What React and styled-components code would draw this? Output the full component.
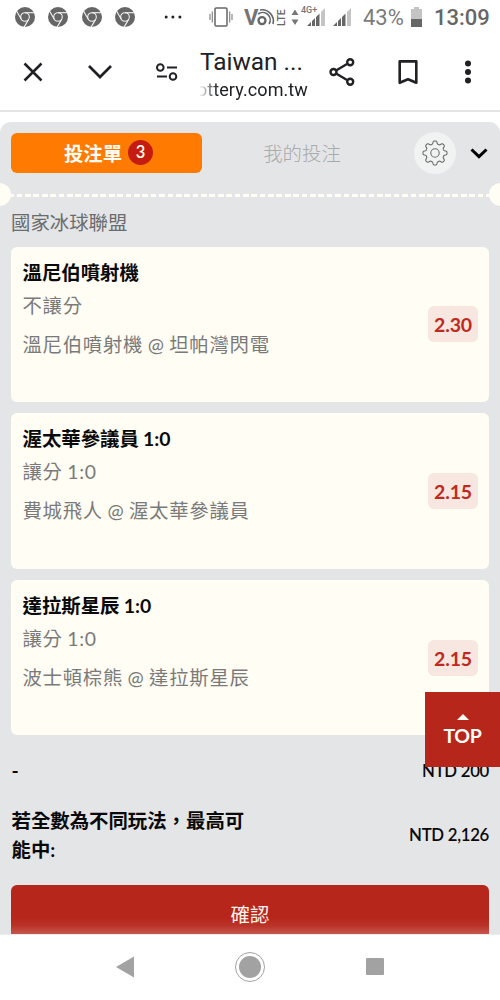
import React from 'react';
import styled, { createGlobalStyle } from 'styled-components';

const Global = createGlobalStyle`
  * { box-sizing: border-box; }
  body { margin: 0; background: #fff; }
  button { border: 0; padding: 0; background: none; font: inherit; color: inherit; }
  svg { display: block; flex: none; overflow: visible; }
`;

const Screen = styled.div`
  position: relative;
  width: 500px;
  height: 1000px;
  overflow: hidden;
  display: flex;
  flex-direction: column;
  background: #fff;
  font-family: Lato, 'Noto Sans CJK TC', sans-serif;
`;

const StatusBar = styled.header`
  height: 34px;
  flex: none;
  display: flex;
  align-items: center;
  justify-content: space-between;
  padding: 0 11px 0 15px;
  font-family: Roboto, sans-serif;
  color: #666;
`;
const StatusGroup = styled.div`
  display: flex;
  align-items: center;
  gap: ${(p) => p.$gap}px;
`;
const Battery = styled.span`
  font-size: 22px;
  line-height: 35px;
  width: 42px;
  white-space: nowrap;
  color: #7c7c7c;
`;
const Clock = styled.span`
  font-size: 22px;
  line-height: 35px;
  font-weight: 500;
  width: 55px;
  white-space: nowrap;
`;

const Toolbar = styled.nav`
  height: 78px;
  flex: none;
  display: flex;
  align-items: center;
  padding: 0 15px 0 23px;
  border-bottom: 2px solid #e3e4e6;
  font-family: Roboto, sans-serif;
  color: #202124;
`;
const ToolButton = styled.button`
  display: flex;
  justify-content: center;
  width: ${(p) => p.$w}px;
  flex: none;
`;
const Site = styled.div`
  width: 109px;
  flex: none;
  padding-top: 5px;
  margin: 0 20px 0 22px;
  white-space: nowrap;
`;
const SiteTitle = styled.div`
  font-size: 24.4px;
  line-height: 30px;
`;
const SiteUrl = styled.div`
  width: 108px;
  overflow: hidden;
  display: flex;
  justify-content: flex-end;
  font-size: 18px;
  letter-spacing: 0.1px;
  line-height: 25px;
  mask-image: linear-gradient(90deg, rgba(0,0,0,0.05), #000 18px);
`;

const Slip = styled.main`
  margin-top: 10px;
  height: 812px;
  flex: none;
  overflow: hidden;
  background: #e4e5e7;
  border-radius: 11px 11px 0 0;
  display: flex;
  flex-direction: column;
  & > * { flex: none; }
`;
const Tabs = styled.div`
  display: flex;
  align-items: center;
  height: 42px;
  margin-top: 10px;
  padding: 0 12px 0 11px;
`;
const Tab = styled.button`
  width: 191px;
  height: 40px;
  display: flex;
  align-items: center;
  justify-content: center;
  gap: 6px;
  border-radius: 6px;
  font-size: 19.4px;
  font-weight: ${(p) => (p.$active ? 600 : 300)};
  color: ${(p) => (p.$active ? '#fffdf4' : '#a9aaac')};
  background: ${(p) => (p.$active ? '#ff7a00' : 'transparent')};
  padding-left: ${(p) => (p.$active ? 4 : 9)}px;
  padding-bottom: 2px;
`;
const Count = styled.span`
  width: 25px;
  height: 25px;
  margin-top: 1px;
  border-radius: 50%;
  background: #c41c10;
  font-size: 16.5px;
  line-height: 25px;
  text-align: center;
`;
const Gear = styled.button`
  width: 42px;
  height: 42px;
  border-radius: 50%;
  background: #f1f3f3;
  display: grid;
  place-items: center;
  margin-left: 21px;
  margin-right: 14px;
`;
const Perforation = styled.div`
  display: flex;
  align-items: center;
  justify-content: space-between;
  height: 23px;
  margin: 8.5px -12px 0;
`;
const Notch = styled.i`
  width: 23px;
  height: 23px;
  border-radius: 50%;
  background: #fffdf4;
`;
const Dashes = styled.i`
  flex: 1;
  height: 3px;
  margin-top: 3px;
  background: repeating-linear-gradient(90deg, #fffdf4 0 3px, transparent 3px 5.7px, #fffdf4 5.7px 8.38px);
`;
const League = styled.h2`
  margin: 0 0 0 11px;
  height: 41.2px;
  padding-top: 3px;
  font-size: 19.4px;
  line-height: 28px;
  font-weight: 400;
  color: #6b6c6e;
`;
const Cards = styled.div`
  display: flex;
  flex-direction: column;
  gap: 11.2px;
  padding: 0 11px;
`;
const Card = styled.article`
  height: 155.4px;
  border-radius: 6px;
  background: #fffdf4;
  display: flex;
  align-items: center;
  justify-content: space-between;
  padding: 0 11px 0 11.5px;
`;
const Pick = styled.div`
  align-self: flex-start;
  padding-top: 11.2px;
`;
const PickName = styled.h3`
  margin: 0;
  font-size: 19.4px;
  line-height: 30px;
  font-weight: 700;
  word-spacing: -0.5px;
  color: #0a0a0a;
`;
const PickLine = styled.p`
  margin: ${(p) => p.$before || 0}px 0 0;
  font-size: 19.4px;
  line-height: 32px;
  font-weight: 400;
  letter-spacing: 0.73px;
  word-spacing: -1.2px;
  color: #7a7a7a;
`;
const Odds = styled.span`
  width: 50px;
  height: 36px;
  border-radius: 6px;
  background: #f7e7e0;
  color: #c0291d;
  font-size: 19.5px;
  line-height: 37px;
  font-weight: 700;
  letter-spacing: -0.2px;
  text-align: center;
`;
const Summary = styled.div`
  display: flex;
  justify-content: space-between;
  align-items: center;
  height: ${(p) => p.$h}px;
  padding: 0 11px 0 11.5px;
  font-size: 19.4px;
  line-height: 29px;
  font-weight: 700;
  color: #0a0a0a;
`;
const SummaryLabel = styled.span`
  width: 240px;
  padding-top: 1px;
`;
const Amount = styled.span`
  padding-top: 1px;
  font-size: 16.8px;
  font-weight: 600;
  letter-spacing: -0.3px;
`;
const Confirm = styled.button`
  margin: 21.4px 11px 0;
  height: 66px;
  flex: none;
  padding-bottom: 9px;
  border-radius: 6px;
  background: linear-gradient(#b6261b 0 33px, #ba3429 41px, #c8574e 49px);
  color: #fff3ea;
  font-size: 19.4px;
`;
const TopButton = styled.button`
  position: absolute;
  right: 0;
  top: 692px;
  width: 75px;
  height: 75px;
  display: flex;
  flex-direction: column;
  align-items: center;
  padding-top: 21px;
  gap: 3px;
  background: #b6261b;
  color: #fffdf8;
  font-size: 19.5px;
  line-height: 26px;
  font-weight: 700;
  letter-spacing: -0.3px;
`;
const NavBar = styled.footer`
  flex: 1;
  display: flex;
  align-items: center;
  justify-content: space-between;
  padding: 0 116px 2px;
  border-top: 1px solid #ececec;
`;

const ChromeIcon = () => (
  <svg width="20" height="20" viewBox="0 0 20 20">
    <circle cx="10" cy="10" r="10" fill="#666" />
    <g fill="none" stroke="#f5f5f5" strokeWidth="1.1">
      <circle cx="10" cy="10" r="4.3" />
      {[0, 120, 240].map((a) => (
        <path key={a} d="M10 5.7H19.2" transform={`rotate(${a} 10 10)`} />
      ))}
    </g>
  </svg>
);

const Signal = () => (
  <svg width="18" height="18" viewBox="0 0 18 18">
    <path d="M0 18L4 14V18ZM5 18V13L8 10V18ZM9 18V9L12.5 5.5V18Z" fill="#666" />
    <path d="M14 18V4L18 0V18Z" fill="#c4c4c4" />
  </svg>
);

const gearPath = (() => {
  const points = [];
  for (let i = 0; i <= 160; i++) {
    const a = (i / 160) * Math.PI * 2;
    const wave = Math.tanh(2.2 * Math.cos(8 * a)) / Math.tanh(2.2);
    const r = 10.6 + 1.4 * wave;
    points.push(`${(13 + r * Math.sin(a)).toFixed(2)} ${(13 - r * Math.cos(a)).toFixed(2)}`);
  }
  return `M${points.join('L')}Z`;
})();

const picks = [
  { name: '溫尼伯噴射機', type: '不讓分', match: '溫尼伯噴射機 @ 坦帕灣閃電', odds: '2.30' },
  { name: '渥太華參議員 1:0', type: '讓分 1:0', match: '費城飛人 @ 渥太華參議員', odds: '2.15' },
  { name: '達拉斯星辰 1:0', type: '讓分 1:0', match: '波士頓棕熊 @ 達拉斯星辰', odds: '2.15' },
];

export default function App() {
  return (
    <Screen>
      <Global />
      <StatusBar>
        <StatusGroup $gap={13.4}>
          <ChromeIcon /><ChromeIcon /><ChromeIcon /><ChromeIcon />
          <svg width="38" height="4" viewBox="0 0 38 4" fill="#222">
            <circle cx="17.2" cy="2" r="1.5" /><circle cx="23.9" cy="2" r="1.5" /><circle cx="30.9" cy="2" r="1.5" />
          </svg>
        </StatusGroup>
        <StatusGroup $gap={0}>
          <svg width="83" height="22" viewBox="1 0 83 22">
            <g fill="none" stroke="#888" strokeWidth="1.2">
              <rect x="6" y="2" width="12" height="18" rx="1.2" stroke="#666" strokeWidth="1.5" />
              <path d="M1 8V14M3.3 5.5V16.5M20.7 5.5V16.5M23 8V14" />
            </g>
            <text x="35" y="18.5" fontFamily="Roboto, sans-serif" fontSize="22" fontWeight="700" fill="#747474">V</text>
            <g fill="none" stroke="#666" strokeWidth="1.6">
              <circle cx="53" cy="14.6" r="3.5" strokeWidth="2.3" />
              <path d="M49 8A7.6 7.6 0 0 1 60.1 18M51 4A11.3 11.3 0 0 1 64 18" />
            </g>
            <text transform="translate(76 20) rotate(-90)" fontFamily="Roboto, sans-serif" fontSize="10.5" fontWeight="500" fill="#666">LTE</text>
            <path d="M82.5 9L86 3.5L89.5 9ZM82.5 13.5L86 19L89.5 13.5Z" fill="#777" />
            <text x="92" y="7" fontFamily="Roboto, sans-serif" fontSize="9" fontWeight="500" fill="#777">4G+</text>
          </svg>
          <svg width="14" height="1" />
          <Signal />
          <svg width="8.5" height="1" />
          <Signal />
          <svg width="12" height="1" />
          <Battery>43%</Battery>
          <svg width="29" height="20" viewBox="1 0 29 20">
            <path d="M10 0H15V2H18V12H7V2H10Z" fill="#c4c4c4" /><path d="M7 12H18V20H7Z" fill="#666" />
          </svg>
          <Clock>13:09</Clock>
        </StatusGroup>
      </StatusBar>

      <Toolbar>
        <ToolButton $w={20} aria-label="關閉">
          <svg width="20" height="20" viewBox="0 0 20 20"><path d="M1.5 1.5L18.5 18.5M18.5 1.5L1.5 18.5" stroke="#202124" strokeWidth="2.5" /></svg>
        </ToolButton>
        <ToolButton $w={113} aria-label="展開">
          <svg width="24" height="14" viewBox="0 0 24 14"><path d="M1 1L12 12L23 1" fill="none" stroke="#202124" strokeWidth="2.7" /></svg>
        </ToolButton>
        <ToolButton $w={22} aria-label="網站設定">
          <svg width="22" height="18" viewBox="0 0 22 18" fill="none" stroke="#202124" strokeWidth="2">
            <circle cx="4.3" cy="4.5" r="3.3" /><path d="M11 4.5H21M1 13.5H11" /><circle cx="17" cy="13.5" r="3.3" />
          </svg>
        </ToolButton>
        <Site>
          <SiteTitle>Taiwan ...</SiteTitle>
          <SiteUrl>lottery.com.tw</SiteUrl>
        </Site>
        <ToolButton $w={26} aria-label="分享">
          <svg width="26" height="28" viewBox="0 0 26 28" fill="none" stroke="#202124" strokeWidth="2.4">
            <path d="M7.5 12.3L18 6M7.5 15.7L18 22" />
            <circle cx="4.5" cy="14" r="3" /><circle cx="21.2" cy="4.3" r="3" /><circle cx="21.2" cy="23.7" r="3" />
          </svg>
        </ToolButton>
        <ToolButton $w={106} aria-label="書籤">
          <svg width="20" height="25" viewBox="0 0 20 25"><path d="M1.7 1.4H18.3V22.8L10 19.2L1.7 22.8Z" fill="none" stroke="#202124" strokeWidth="2.6" strokeLinejoin="round" /></svg>
        </ToolButton>
        <ToolButton $w={14} aria-label="選單">
          <svg width="6" height="24" viewBox="0 0 6 24" fill="#202124"><circle cx="3" cy="3.5" r="3" /><circle cx="3" cy="12" r="3" /><circle cx="3" cy="20.5" r="3" /></svg>
        </ToolButton>
      </Toolbar>

      <Slip>
        <Tabs>
          <Tab $active>投注單<Count>3</Count></Tab>
          <Tab>我的投注</Tab>
          <Gear aria-label="設定">
            <svg width="26" height="26" viewBox="0 0 26 26" fill="none" stroke="#6d6d6d" strokeWidth="1.1"><path d={gearPath} /><circle cx="13" cy="13" r="4.2" /></svg>
          </Gear>
          <svg width="18" height="11" viewBox="0 0 18 11"><path d="M1.5 1.5L9 8.7L16.5 1.5" fill="none" stroke="#000" strokeWidth="3" /></svg>
        </Tabs>
        <Perforation><Notch /><Dashes /><Notch /></Perforation>
        <League>國家冰球聯盟</League>
        <Cards>
          {picks.map((pick) => (
            <Card key={pick.name}>
              <Pick>
                <PickName>{pick.name}</PickName>
                <PickLine $before={2}>{pick.type}</PickLine>
                <PickLine $before={7}>{pick.match}</PickLine>
              </Pick>
              <Odds>{pick.odds}</Odds>
            </Card>
          ))}
        </Cards>
        <Summary $h={70}><SummaryLabel>-</SummaryLabel><Amount>NTD 200</Amount></Summary>
        <Summary $h={58}><SummaryLabel>若全數為不同玩法，最高可能中:</SummaryLabel><Amount>NTD 2,126</Amount></Summary>
        <Confirm>確認</Confirm>
      </Slip>

      <NavBar>
        <svg width="18" height="22" viewBox="0 0 18 22"><path d="M0 11L18 0.5V21.5Z" fill="#a2a2a2" /></svg>
        <svg width="30" height="30" viewBox="0 0 30 30"><circle cx="15" cy="15" r="14.5" fill="none" stroke="#a2a2a2" /><circle cx="15" cy="15" r="11" fill="#a2a2a2" /></svg>
        <svg width="18" height="18" viewBox="0 0 18 18"><rect width="18" height="17" rx="1" fill="#a2a2a2" /></svg>
      </NavBar>
      <TopButton>
        <svg width="12" height="7" viewBox="0 0 12 7"><path d="M0 7L6 1L12 7Z" fill="#fffdf8" /></svg>
        TOP
      </TopButton>
    </Screen>
  );
}
